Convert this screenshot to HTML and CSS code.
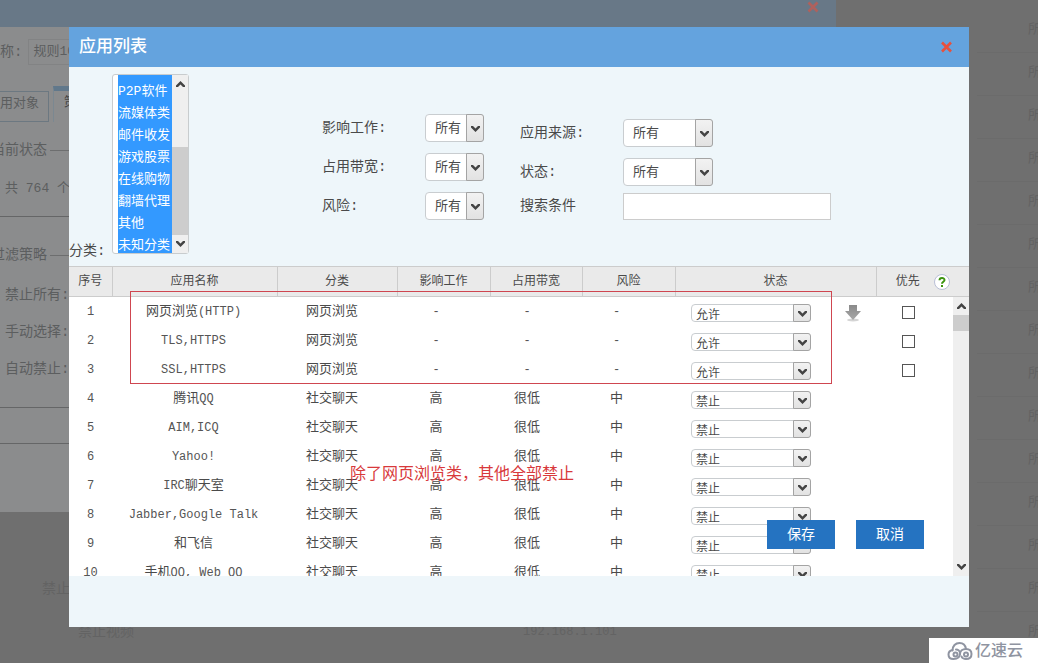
FILE: index.html
```html
<!DOCTYPE html>
<html lang="zh-CN">
<head>
<meta charset="utf-8">
<title>应用列表</title>
<link rel="stylesheet" href="styles.css">
</head>
<body>
<svg class="defs" aria-hidden="true">
  <symbol id="down" viewBox="0 0 9 7"><path d="M0 1h2l2.500 2.500L7 1h2v1.500L4.500 7 0 2.500z" fill="#444"/></symbol>
  <symbol id="up" viewBox="0 0 9 7"><path d="M0 6h2l2.500-2.500L7 6h2V4.500L4.500 0 0 4.500z" fill="#444"/></symbol>
  <symbol id="close" viewBox="0 0 12 12"><path d="M1.500 1.500l9 9m0-9l-9 9" stroke="#e8503c" stroke-width="2.600" fill="none"/></symbol>
</svg>

<main class="page">
  <section class="rule">
    <header class="rule-head"><svg class="rule-close"><use href="#close"/></svg></header>
    <div class="rule-body">
      <div class="rule-name"><span>称:</span><span class="rule-input">规则10</span></div>
      <div class="rule-tabs"><span class="tab">用对象</span><span class="tab tab-on">策略</span></div>
      <div class="legend legend-cut">当前状态</div>
      <p class="count">共 764 个</p>
      <div class="legend legend-cut legend-next">过滤策略</div>
      <p class="option">禁止所有:</p>
      <p class="option">手动选择:</p>
      <p class="option">自动禁止:</p>
      <div class="strip"></div>
    </div>
  </section>
  <div class="lower">
    <span class="lower-a">禁止</span>
    <div class="lower-row"><span>禁止视频</span><span class="ip">192.168.1.101</span></div>
  </div>
  <ul class="side">
    <li>所有</li><li>所有</li><li>所有</li><li>所有</li><li>所有</li><li>所有</li><li>所有</li><li>所有</li><li>所有</li><li>所有</li><li>所有</li><li>所有</li><li>所有</li><li>所有</li><li>所有</li>
  </ul>
</main>

<section class="dialog" role="dialog" aria-labelledby="title">
  <header class="head">
    <h1 id="title">应用列表</h1>
    <button class="close" type="button" aria-label="关闭"><svg><use href="#close"/></svg></button>
  </header>

  <form class="filters">
    <div class="category">
      <label for="cat">分类:</label>
      <div class="listbox">
        <select id="cat" multiple>
          <option selected>P2P软件</option>
          <option selected>流媒体类</option>
          <option selected>邮件收发</option>
          <option selected>游戏股票</option>
          <option selected>在线购物</option>
          <option selected>翻墙代理</option>
          <option selected>其他</option>
          <option selected>未知分类</option>
        </select>
        <div class="bar">
          <svg><use href="#up"/></svg><span class="thumb thumb-list"></span><svg><use href="#down"/></svg>
        </div>
      </div>
    </div>
    <div class="fields fields-a">
      <div class="field"><label for="f1">影响工作:</label><span class="pick"><select id="f1"><option>所有</option></select><span class="knob"><svg><use href="#down"/></svg></span></span></div>
      <div class="field"><label for="f2">占用带宽:</label><span class="pick"><select id="f2"><option>所有</option></select><span class="knob"><svg><use href="#down"/></svg></span></span></div>
      <div class="field"><label for="f3">风险:</label><span class="pick"><select id="f3"><option>所有</option></select><span class="knob"><svg><use href="#down"/></svg></span></span></div>
    </div>
    <div class="fields fields-b">
      <div class="field"><label for="f4">应用来源:</label><span class="pick wide"><select id="f4"><option>所有</option></select><span class="knob"><svg><use href="#down"/></svg></span></span></div>
      <div class="field"><label for="f5">状态:</label><span class="pick wide"><select id="f5"><option>所有</option></select><span class="knob"><svg><use href="#down"/></svg></span></span></div>
      <div class="field field-search"><label for="f6">搜索条件</label><input id="f6" class="search" type="text"></div>
    </div>
  </form>

  <table class="grid grid-head">
    <colgroup><col class="h1"><col class="h2"><col class="h3"><col class="h4"><col class="h5"><col class="h6"><col class="h7"><col class="h8"></colgroup>
    <thead><tr>
      <th>序号</th><th>应用名称</th><th>分类</th><th>影响工作</th><th>占用带宽</th><th>风险</th><th>状态</th>
      <th><div class="priority">优先<svg class="help" viewBox="0 0 16 16"><circle cx="8" cy="8" r="7.500" fill="#fff" stroke="#b9bfd6"/><path d="M5.500 6.300C5.500 3.300 10.500 3.300 10.500 6 10.500 7.800 8 7.800 8 9.800M8 11v2" fill="none" stroke="#3c9410" stroke-width="2"/></svg></div></th>
    </tr></thead>
  </table>

  <div class="scroller">
    <div class="rows">
      <table class="grid grid-body">
        <colgroup><col class="b1"><col class="b2"><col class="b3"><col class="b4"><col class="b5"><col class="b6"><col class="b7"><col class="b8"></colgroup>
        <tbody>
          <tr><td class="en">1</td><td>网页浏览<span class="en">(HTTP)</span></td><td>网页浏览</td><td class="en">-</td><td class="en">-</td><td class="en">-</td><td><div class="state"><span class="pick slim"><select aria-label="状态 1"><option>允许</option></select><span class="knob"><svg><use href="#down"/></svg></span></span><svg class="move" viewBox="0 0 16 17"><defs><linearGradient id="metal" x2="0" y2="1"><stop offset="0" stop-color="#8a8a8a"/><stop offset="1" stop-color="#a8a8a8"/></linearGradient></defs><ellipse cx="8" cy="15" rx="6" ry="1.500" fill="#d4d4d4"/><path d="M4 0h8v6h4l-8 9-8-9h4z" fill="url(#metal)"/></svg></div></td><td><input class="tick" type="checkbox" aria-label="优先 1"></td></tr>
          <tr><td class="en">2</td><td class="en">TLS,HTTPS</td><td>网页浏览</td><td class="en">-</td><td class="en">-</td><td class="en">-</td><td><div class="state"><span class="pick slim"><select aria-label="状态 2"><option>允许</option></select><span class="knob"><svg><use href="#down"/></svg></span></span></div></td><td><input class="tick" type="checkbox" aria-label="优先 2"></td></tr>
          <tr><td class="en">3</td><td class="en">SSL,HTTPS</td><td>网页浏览</td><td class="en">-</td><td class="en">-</td><td class="en">-</td><td><div class="state"><span class="pick slim"><select aria-label="状态 3"><option>允许</option></select><span class="knob"><svg><use href="#down"/></svg></span></span></div></td><td><input class="tick" type="checkbox" aria-label="优先 3"></td></tr>
          <tr><td class="en">4</td><td>腾讯<span class="en">QQ</span></td><td>社交聊天</td><td>高</td><td>很低</td><td>中</td><td><div class="state"><span class="pick slim"><select aria-label="状态 4"><option>禁止</option></select><span class="knob"><svg><use href="#down"/></svg></span></span></div></td><td></td></tr>
          <tr><td class="en">5</td><td class="en">AIM,ICQ</td><td>社交聊天</td><td>高</td><td>很低</td><td>中</td><td><div class="state"><span class="pick slim"><select aria-label="状态 5"><option>禁止</option></select><span class="knob"><svg><use href="#down"/></svg></span></span></div></td><td></td></tr>
          <tr><td class="en">6</td><td class="en">Yahoo!</td><td>社交聊天</td><td>高</td><td>很低</td><td>中</td><td><div class="state"><span class="pick slim"><select aria-label="状态 6"><option>禁止</option></select><span class="knob"><svg><use href="#down"/></svg></span></span></div></td><td></td></tr>
          <tr><td class="en">7</td><td><span class="en">IRC</span>聊天室</td><td>社交聊天</td><td>高</td><td>很低</td><td>中</td><td><div class="state"><span class="pick slim"><select aria-label="状态 7"><option>禁止</option></select><span class="knob"><svg><use href="#down"/></svg></span></span></div></td><td></td></tr>
          <tr><td class="en">8</td><td class="en">Jabber,Google Talk</td><td>社交聊天</td><td>高</td><td>很低</td><td>中</td><td><div class="state"><span class="pick slim"><select aria-label="状态 8"><option>禁止</option></select><span class="knob"><svg><use href="#down"/></svg></span></span></div></td><td></td></tr>
          <tr><td class="en">9</td><td>和飞信</td><td>社交聊天</td><td>高</td><td>很低</td><td>中</td><td><div class="state"><span class="pick slim"><select aria-label="状态 9"><option>禁止</option></select><span class="knob"><svg><use href="#down"/></svg></span></span></div></td><td></td></tr>
          <tr><td class="en">10</td><td>手机<span class="en">QQ, Web QQ</span></td><td>社交聊天</td><td>高</td><td>很低</td><td>中</td><td><div class="state"><span class="pick slim"><select aria-label="状态 10"><option>禁止</option></select><span class="knob"><svg><use href="#down"/></svg></span></span></div></td><td></td></tr>
        </tbody>
      </table>
    </div>
    <div class="bar">
      <svg><use href="#up"/></svg><span class="thumb"></span><svg><use href="#down"/></svg>
    </div>
  </div>
  <div class="actions"><button type="button">保存</button><button type="button">取消</button></div>
  <div class="mark-box"></div>
  <p class="mark-note">除了网页浏览类，其他全部禁止</p>
</section>

<div class="brand">
  <svg viewBox="0 0 26 20" fill="none" stroke="#8f94a1" stroke-width="2" stroke-linecap="round"><path d="M5.500 9.500C5.500 5 8.500 2 12.500 2c3.500 0 6 2.500 6.500 6"/><path d="M5.500 9C3 9.500 1.500 11.300 1.500 13.500 1.500 16.500 3.500 18 6.500 18c5 0 6.500-3 6.500-5.500C13 10 11 8.500 9 8.500"/><circle cx="8.500" cy="13.500" r="2"/><path d="M13 13c0-3 2.500-5 6-5 3.300 0 5.500 2 5.500 5s-2.200 5-5.500 5c-2.500 0-4-1.200-4.500-2.500"/><circle cx="19" cy="13.500" r="2"/></svg>
  <span>亿速云</span>
</div>
</body>
</html>
```

FILE: styles.css
```css
* { box-sizing: border-box; }
body {
  margin: 0;
  min-height: 100vh;
  position: relative;
  overflow: hidden;
  background: #6f6f6f;
  color: #4a4a4a;
  font: 13px/20px "Liberation Mono", "Noto Sans CJK SC", monospace;
}
p, h1, ul { margin: 0; padding: 0; }
.defs { position: absolute; width: 0; height: 0; }

/* dimmed page below the dialog */
.page {
  display: grid;
  grid-template-columns: minmax(0, 1fr) 202px;
  height: 100vh;
  overflow: hidden;
  grid-template-rows: 512px 1fr;
  color: #5c5e5f;
}
.rule { background: #8b8c8d; }
.rule-head {
  display: flex;
  justify-content: flex-end;
  height: 27px;
  padding: 1px 17px;
  background: #687887;
}
.rule-close { width: 12px; height: 12px; opacity: .55; }
.rule-body { display: flex; flex-direction: column; font-size: 14px; }
.rule-name { display: flex; gap: 6px; height: 50px; padding-top: 12px; line-height: 26px; }
.rule-input { height: 26px; width: 150px; padding-left: 4px; border: 1px solid #828384; font-size: 13px; line-height: 24px; }
.rule-tabs { display: flex; align-items: flex-end; gap: 4px; height: 46px; }
.tab { height: 31px; width: 49px; line-height: 24px; border: 1px solid #6c7881; border-left: 0; margin-bottom: 1px; font-size: 13px; }
.tab-on { height: 36px; width: 90px; padding-left: 10px; border: 1px solid #7b8891; border-top: 5px solid #61788b; border-bottom: 0; color: #444; }
.legend { display: flex; align-items: center; height: 20px; margin-top: 17px; gap: 3px; }
.legend::after { content: ""; flex: 1; border-top: 1px solid #6d6e6f; }
.legend-cut { margin-left: -9px; }
.count { padding: 19px 0 17px 5px; border-bottom: 1px solid #656667; font-size: 13px; }
.legend-next { margin-top: 28px; margin-bottom: 12px; }
.option { height: 37px; padding: 8px 0 0 5px; }
.strip { height: 37px; margin-top: 19px; border: solid #656667; border-width: 1px 0; }
.lower { color: #636363; padding: 67px 0 0 42px; font-size: 14px; }
.lower-row { display: flex; gap: 389px; margin: 23px 0 0 36px; white-space: nowrap; }
.ip { font-size: 12px; }
.side { grid-column: 2; grid-row: 1 / 3; list-style: none; margin: 10px 0 0 141px; overflow: hidden; color: #626262; }
.side li { height: 43px; padding: 10px 0 0 51px; white-space: nowrap; border-bottom: 1px solid #6b6b6b; }

/* dialog */
.dialog { position: absolute; top: 27px; left: 69px; right: 69px; padding-bottom: 51px; background: #eef6fa; }
.head { display: flex; align-items: center; justify-content: space-between; height: 40px; padding: 0 16px 0 10px; background: #64a3de; }
.head h1 { padding-top: 2px; color: #fff; font-size: 17px; font-weight: 500; line-height: 24px; }
button { font: inherit; border: 0; cursor: pointer; }
.close { display: flex; padding: 0; background: none; }
.close svg { width: 13px; height: 12px; }

.filters { display: flex; height: 199px; font-size: 14px; }
.category { display: flex; align-items: flex-end; width: 253px; padding: 7px 0 12px; }
.category label { width: 43px; line-height: 6px; white-space: nowrap; }
.listbox { display: flex; width: 77px; height: 180px; padding-left: 5px; border: 1px solid #c8ccce; border-radius: 3px; background: #fff; }
.listbox select {
  flex: 1;
  min-width: 0;
  height: 178px;
  padding: 5px 0 0;
  border: 0;
  outline: 0;
  border-radius: 0;
  overflow: hidden;
  background: #39f;
  font: 13px/22px "Liberation Mono", "Noto Sans CJK SC", monospace;
}
.listbox option { height: 22px; min-height: 22px; padding: 0; }
.listbox option:checked { background: #39f linear-gradient(#39f, #39f); color: #fff; }
.bar { display: flex; flex-direction: column; align-items: center; justify-content: space-between; width: 16px; padding: 6px 0; background: #efefef; }
.bar svg { width: 9px; height: 7px; }
.thumb { width: 100%; height: 16px; margin: 5px 0 auto; background: #cdcdcd; }
.thumb-list { height: 88px; margin: auto 0 5px; }

.fields { display: flex; flex-direction: column; }
.fields-a { width: 198px; padding-top: 47px; }
.fields-b { padding-top: 52px; }
.field { display: flex; align-items: center; height: 28px; }
.field + .field { margin-top: 11px; }
.field + .field-search { margin-top: 6px; }
.field label { width: 103px; }
.pick { position: relative; display: flex; width: 59px; height: 28px; }
.pick select {
  appearance: none;
  width: 100%;
  padding: 2px 0 0 9px;
  border: 1px solid #c9cdd0;
  border-radius: 4px;
  background: #fff;
  color: #4a4a4a;
  font: 13px/20px "Liberation Mono", "Noto Sans CJK SC", monospace;
}
.wide { width: 90px; }
.pick.slim { width: 120px; height: 18px; }
.pick.slim select { padding: 3px 0 0 4px; font-size: 12px; line-height: 16px; }
.knob {
  position: absolute;
  top: 0;
  right: 0;
  bottom: 0;
  display: flex;
  align-items: center;
  justify-content: center;
  width: 18px;
  border: 1px solid #a4a4a4;
  border-radius: 0 3px 3px 0;
  background: linear-gradient(#f2f2f2, #e2e2e2);
  pointer-events: none;
}
.knob svg { width: 9px; height: 7px; }
.search { width: 208px; height: 27px; padding: 0 6px; border: 1px solid #ccc; background: #fff; font: inherit; }

.grid { width: 100%; table-layout: fixed; border-collapse: collapse; text-align: center; }
.grid th { height: 30px; padding: 0; border: 1px solid #ccc; border-width: 1px 0 1px 1px; background: #eaeaea; font-size: 12px; font-weight: 400; }
.grid th:first-child { border-left: 0; }
.grid td { height: 29px; padding: 0; }
.en { font-size: 12px; color: #555; }
.h1, .b1 { width: 43px; } .h2 { width: 165px; } .h3 { width: 120px; } .h4 { width: 93px; }
.h5 { width: 92px; } .h6 { width: 93px; } .h7 { width: 201px; } .h8 { width: 93px; }
.b2 { width: 163px; } .b3 { width: 114px; } .b4 { width: 94px; } .b5 { width: 88px; }
.b6 { width: 91px; } .b7 { width: 200px; } .b8 { width: 92px; }
.priority { display: flex; align-items: center; justify-content: center; gap: 14px; }
.help { width: 16px; height: 16px; }
.scroller { display: flex; height: 279px; background: #fff; }
.rows { flex: 1; overflow: hidden; }
.state { display: flex; align-items: center; gap: 34px; padding: 3px 0 0 29px; }
.move { width: 16px; height: 17px; }
.tick { appearance: none; display: block; width: 13px; height: 13px; margin: 2px auto 0; border: 1px solid #555; background: #fff; }

.actions { position: absolute; right: 45px; bottom: 78px; display: flex; gap: 21px; }
.actions button { width: 68px; height: 29px; padding: 0; background: #2573c1; color: #fff; font-size: 14px; }
.mark-box { position: absolute; top: 264px; left: 61px; width: 702px; height: 93px; border: 1px solid #cf4650; pointer-events: none; }
.mark-note { position: absolute; top: 438px; left: 281px; color: #d8393b; font-size: 16px; white-space: nowrap; }

.brand { position: absolute; right: 0; bottom: 0; display: flex; align-items: center; gap: 2px; width: 109px; height: 25px; padding-left: 18px; background: #fff; color: #8f94a1; font-size: 16px; font-weight: 500; white-space: nowrap; }
.brand svg { width: 26px; height: 20px; }
.brand span { padding-top: 2px; }
```
